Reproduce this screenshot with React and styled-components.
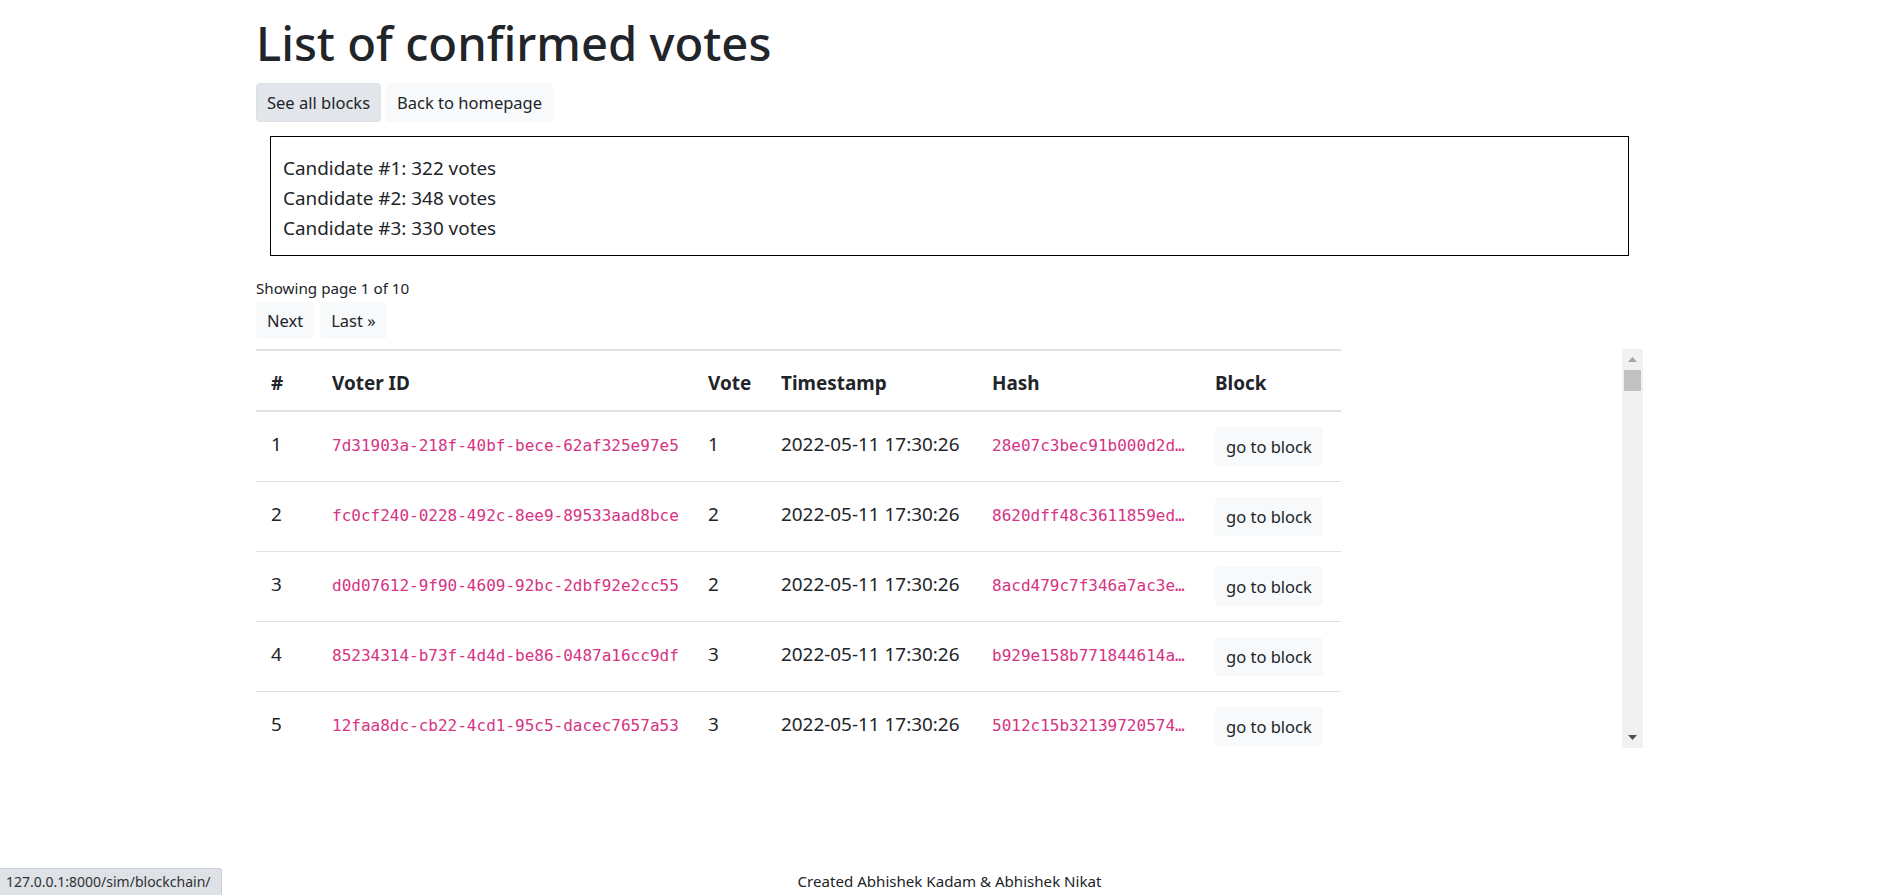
import React from 'react';
import styled, { createGlobalStyle } from 'styled-components';

const GlobalStyle = createGlobalStyle`
  *, *::before, *::after { box-sizing: border-box; }
  html, body { margin: 0; padding: 0; background: #fff; }
  body {
    font-family: "Noto Sans", "Segoe UI", sans-serif;
    font-size: 18.9px;
    line-height: 30px;
    color: #212529;
  }
`;

const Page = styled.div`
  min-height: 100vh;
  display: flex;
  flex-direction: column;
`;

const Container = styled.main`
  width: 1387px;
  margin: 0 auto;
  padding-top: 13px;
`;

const Title = styled.h1`
  margin: 0 0 10px;
  font-size: 47.2px;
  font-weight: 500;
  line-height: 60px;
`;

const ButtonRow = styled.div`
  display: flex;
  gap: ${(p) => p.$gap || 5}px;
  margin-top: ${(p) => p.$offset || 0}px;
`;

const Button = styled.a`
  display: inline-block;
  font-size: 16.5px;
  line-height: 27px;
  padding: ${(p) => (p.$compact ? '4px 10px' : '5px 10px')};
  border: 1px solid ${(p) => (p.$active ? '#dae0e5' : '#f8f9fa')};
  background: ${(p) => (p.$active ? '#e2e6ea' : '#f8f9fa')};
  border-radius: 4px;
  color: #212529;
  text-decoration: none;
  white-space: nowrap;
  cursor: pointer;
`;

const TallyBox = styled.div`
  margin: 14px 14px 0;
  border: 1px solid #000;
  padding: 16px 12px 12px;
`;

const TallyLine = styled.p`
  margin: 0;
`;

const PageInfo = styled.div`
  margin-top: 19px;
  font-size: 15.2px;
  line-height: 26px;
`;

const ScrollArea = styled.div`
  margin-top: 10px;
  height: 399px;
  display: flex;
`;

const Viewport = styled.div`
  flex: 1;
  min-width: 0;
  overflow: hidden;
`;

const Scrollbar = styled.div`
  width: 21px;
  flex: none;
  display: flex;
  flex-direction: column;
  background: #f1f1f1;
`;

const ScrollButton = styled.div`
  height: 21px;
  flex: none;
  display: flex;
  align-items: center;
  justify-content: center;
`;

const Thumb = styled.div`
  height: 21px;
  margin: 0 2px;
  background: #c1c1c1;
`;

const Spacer = styled.div`
  flex: 1;
`;

const Table = styled.table`
  width: 1085px;
  table-layout: fixed;
  border-collapse: separate;
  border-spacing: 0;
`;

const Th = styled.th`
  text-align: left;
  font-weight: 700;
  padding: 17px 15px 12px;
  border-top: 2px solid #dee2e6;
  border-bottom: 2px solid #dee2e6;
  white-space: nowrap;
  vertical-align: bottom;
`;

const Td = styled.td`
  padding: 15px 15px;
  border-bottom: 1px solid #dee2e6;
  vertical-align: top;
  line-height: 34px;
  white-space: nowrap;
`;

const Code = styled.code`
  font-family: "DejaVu Sans Mono", "Liberation Mono", monospace;
  font-size: 16px;
  color: #d63384;
`;

const Footer = styled.footer`
  margin-top: auto;
  text-align: center;
  font-size: 15.1px;
  line-height: 24px;
  padding-bottom: 2px;
`;

const StatusBubble = styled.div`
  position: fixed;
  left: 0;
  bottom: 0;
  width: 222px;
  height: 27px;
  padding: 0 6px;
  background: #dee1e6;
  border-top: 1px solid #ccd0d5;
  border-right: 1px solid #ccd0d5;
  border-top-right-radius: 3px;
  font-size: 14px;
  line-height: 26px;
  color: #303134;
  white-space: nowrap;
`;

const rows = [
  { n: 1, id: '7d31903a-218f-40bf-bece-62af325e97e5', vote: 1, hash: '28e07c3bec91b000d2d4f0b7a1c96e3d52a8f4c017be69d3a5c2e81f04b7d69a' },
  { n: 2, id: 'fc0cf240-0228-492c-8ee9-89533aad8bce', vote: 2, hash: '8620dff48c3611859ed2a7c4e09b15f36d8a2c7e41f09b3d5a6c8e2f170b4d93' },
  { n: 3, id: 'd0d07612-9f90-4609-92bc-2dbf92e2cc55', vote: 2, hash: '8acd479c7f346a7ac3e1b05d92f7c6e48a3b1d0f2e5c79a46b8d3f01e2c5a7b9' },
  { n: 4, id: '85234314-b73f-4d4d-be86-0487a16cc9df', vote: 3, hash: 'b929e158b771844614a0c3e7d2b95f18a6e4c02d7b3f95a1e8c6d40b2f7a93e5' },
  { n: 5, id: '12faa8dc-cb22-4cd1-95c5-dacec7657a53', vote: 3, hash: '5012c15b32139720574e8b2d06f9a3c71e5d4b8a2f06c93e7d1b5a48c2e9f063' },
];

const colWidths = [61, 376, 73, 211, 223, 141];

const shortHash = (h) => `${h.slice(0, 19)}…`;

function Arrow({ down, color }) {
  return (
    <svg width="9" height="5" viewBox="0 0 9 5" aria-hidden="true">
      <polygon points={down ? '0,0 9,0 4.5,5' : '4.5,0 9,5 0,5'} fill={color} />
    </svg>
  );
}

export default function App() {
  return (
    <>
      <GlobalStyle />
      <Page>
        <Container>
          <Title>List of confirmed votes</Title>
          <ButtonRow>
            <Button $active>See all blocks</Button>
            <Button>Back to homepage</Button>
          </ButtonRow>
          <TallyBox>
            <TallyLine>Candidate #1: 322 votes</TallyLine>
            <TallyLine>Candidate #2: 348 votes</TallyLine>
            <TallyLine>Candidate #3: 330 votes</TallyLine>
          </TallyBox>
          <PageInfo>Showing page 1 of 10</PageInfo>
          <ButtonRow $gap={6} $offset={1}>
            <Button $compact>Next</Button>
            <Button $compact>Last »</Button>
          </ButtonRow>
          <ScrollArea>
            <Viewport>
              <Table>
                <colgroup>
                  {colWidths.map((w, i) => (
                    <col key={i} style={{ width: w }} />
                  ))}
                </colgroup>
                <thead>
                  <tr>
                    <Th>#</Th>
                    <Th>Voter ID</Th>
                    <Th>Vote</Th>
                    <Th>Timestamp</Th>
                    <Th>Hash</Th>
                    <Th>Block</Th>
                  </tr>
                </thead>
                <tbody>
                  {rows.map((r) => (
                    <tr key={r.n}>
                      <Td>{r.n}</Td>
                      <Td><Code>{r.id}</Code></Td>
                      <Td>{r.vote}</Td>
                      <Td>2022-05-11 17:30:26</Td>
                      <Td><Code title={r.hash}>{shortHash(r.hash)}</Code></Td>
                      <Td><Button>go to block</Button></Td>
                    </tr>
                  ))}
                </tbody>
              </Table>
            </Viewport>
            <Scrollbar>
              <ScrollButton><Arrow color="#a3a3a3" /></ScrollButton>
              <Thumb />
              <Spacer />
              <ScrollButton><Arrow down color="#505050" /></ScrollButton>
            </Scrollbar>
          </ScrollArea>
        </Container>
        <Footer>Created Abhishek Kadam &amp; Abhishek Nikat</Footer>
      </Page>
      <StatusBubble>127.0.0.1:8000/sim/blockchain/</StatusBubble>
    </>
  );
}
